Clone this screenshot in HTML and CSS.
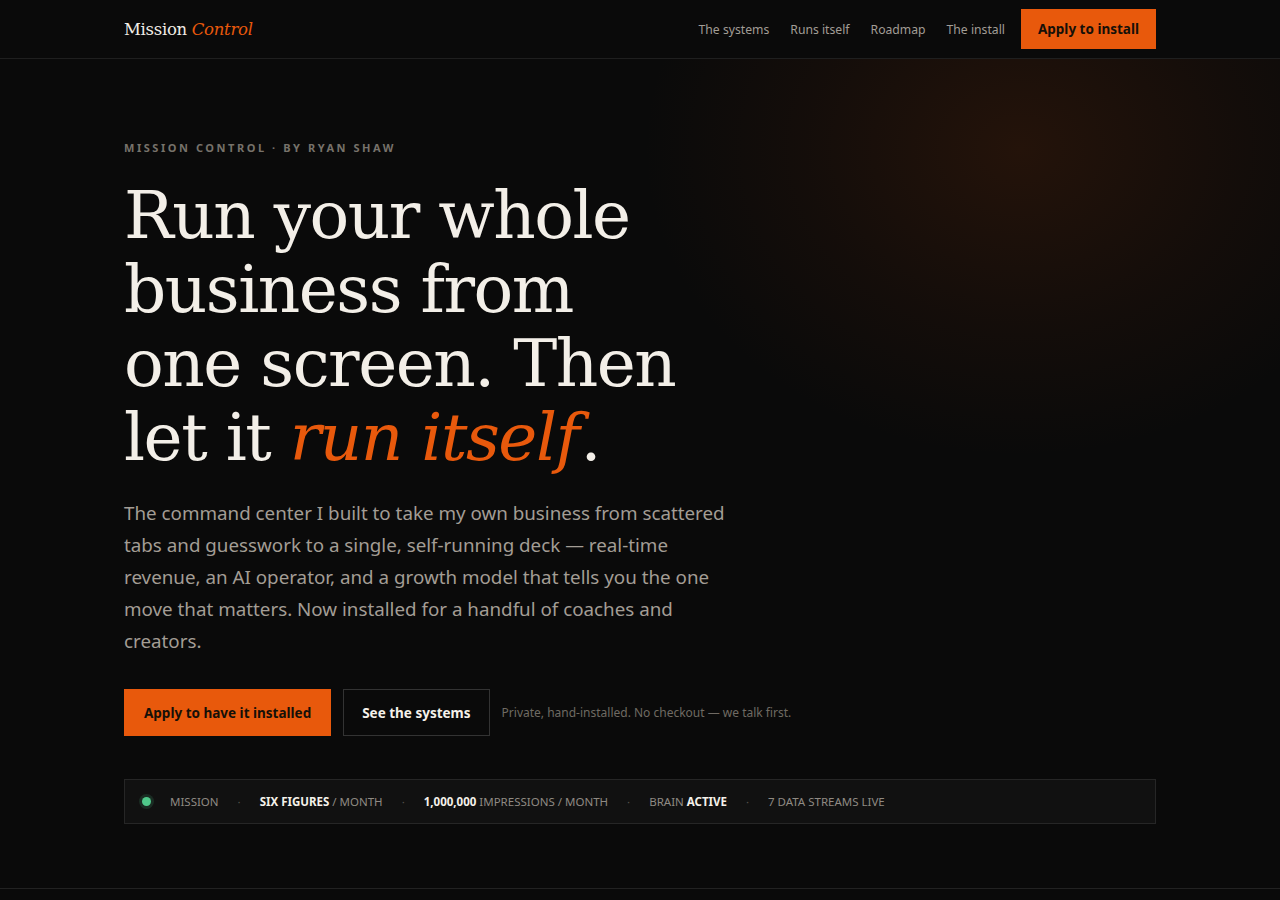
FILE: index.html
```html
<!DOCTYPE html>
<html lang="en">
<head>
<meta charset="utf-8">
<title>Mission Control</title>
<link rel="stylesheet" href="styles.css">
</head>
<body>
<header class="topbar">
  <div class="wrap topbar-inner">
    <a class="logo" href="#">Mission <em>Control</em></a>
    <nav class="nav">
      <a href="#">The systems</a>
      <a href="#">Runs itself</a>
      <a href="#">Roadmap</a>
      <a href="#">The install</a>
      <a class="btn btn-primary btn-sm" href="#">Apply to install</a>
    </nav>
  </div>
</header>
<main class="hero">
  <div class="glow"></div>
  <div class="wrap hero-inner">
    <p class="eyebrow">Mission Control · By Ryan Shaw</p>
    <h1 class="headline">Run your whole business from one screen. Then let it <em>run itself</em>.</h1>
    <p class="lede">The command center I built to take my own business from scattered tabs and guesswork to a single, self-running deck — real-time revenue, an AI operator, and a growth model that tells you the one move that matters. Now installed for a handful of coaches and creators.</p>
    <div class="actions">
      <a class="btn btn-primary" href="#">Apply to have it installed</a>
      <a class="btn btn-ghost" href="#">See the systems</a>
      <span class="note">Private, hand-installed. No checkout — we talk first.</span>
    </div>
    <div class="status">
      <span class="dot"></span>
      <span class="item">Mission</span>
      <span class="sep">·</span>
      <span class="item"><b>Six figures</b> / month</span>
      <span class="sep">·</span>
      <span class="item"><b>1,000,000</b> impressions / month</span>
      <span class="sep">·</span>
      <span class="item">Brain <b>active</b></span>
      <span class="sep">·</span>
      <span class="item">7 data streams live</span>
    </div>
  </div>
</main>
</body>
</html>
```
FILE: styles.css
```css
* { box-sizing: border-box; }
html, body { margin: 0; padding: 0; }
body {
  background: #0a0a0a;
  color: #f3efe8;
  font-family: "Noto Sans", "Open Sans", sans-serif;
  min-height: 900px;
}
a { text-decoration: none; color: inherit; }
.wrap { width: 1032px; margin: 0 auto; }

.topbar {
  height: 59px;
  border-bottom: 1px solid #1f1f1f;
  position: relative;
  z-index: 2;
  background: #0a0a0a;
}
.topbar-inner {
  height: 58px;
  display: flex;
  align-items: center;
  justify-content: space-between;
}
.logo {
  font-family: "DejaVu Serif", Georgia, serif;
  font-size: 16.5px;
  color: #f1ede6;
  letter-spacing: -0.3px;
}
.logo em { color: #e8590c; font-style: italic; }
.nav { display: flex; align-items: center; gap: 21px; }
.nav a { font-size: 12.2px; color: #a29d96; }
.btn {
  display: inline-flex;
  align-items: center;
  justify-content: center;
  font-weight: 700;
  font-size: 13.5px;
}
.btn-primary { background: #e8590c; color: #151008; }
.nav a.btn-primary { color: #151008; font-size: 13.5px; height: 40px; padding: 0 17px; margin-left: -5px; }
.hero {
  position: relative;
  border-bottom: 1px solid #222;
  height: 830px;
  overflow: hidden;
}
.glow {
  position: absolute;
  left: 640px; top: -220px;
  width: 760px; height: 620px;
  background: radial-gradient(ellipse at 50% 50%, rgba(140, 55, 10, 0.20) 0%, rgba(120, 45, 10, 0.09) 40%, rgba(10, 10, 10, 0) 70%);
  pointer-events: none;
}
.hero-inner { position: relative; padding-top: 81px; }
.eyebrow {
  margin: 0;
  font-size: 11px;
  font-weight: 700;
  letter-spacing: 2.55px;
  text-transform: uppercase;
  color: #77726a;
}
.headline {
  margin: 24px 0 0;
  font-family: "DejaVu Serif", Georgia, serif;
  font-weight: 400;
  font-size: 66px;
  line-height: 74px;
  letter-spacing: -1.5px;
  color: #f3efe8;
  width: 570px;
}
.headline em { color: #e8590c; font-style: italic; padding-right: 2px; }
.lede {
  margin: 22px 0 0;
  width: 610px;
  font-size: 18.8px;
  line-height: 32px;
  color: #a39d95;
}
.actions {
  margin-top: 32px;
  display: flex;
  align-items: center;
  gap: 12px;
}
.actions .btn { height: 47px; padding: 0 20px; }
.actions .btn-ghost { padding: 0 18px; }
.btn-ghost { border: 1px solid #333; color: #f5f1ea; background: transparent; }
.note { font-size: 12px; color: #6f6a63; }
.status {
  margin-top: 43px;
  height: 45px;
  border: 1px solid #262626;
  background: #111;
  display: flex;
  align-items: center;
  padding: 0 17px;
  gap: 19px;
  font-size: 11.5px;
  text-transform: uppercase;
  color: #8f8a83;
}
.status b { color: #f5f1ea; font-weight: 700; }
.dot {
  width: 9px; height: 9px; border-radius: 50%;
  background: #4fc98a;
  box-shadow: 0 0 0 3px rgba(79, 201, 138, 0.15);
  margin-right: 0;
}
.sep { color: #55514b; }
```
